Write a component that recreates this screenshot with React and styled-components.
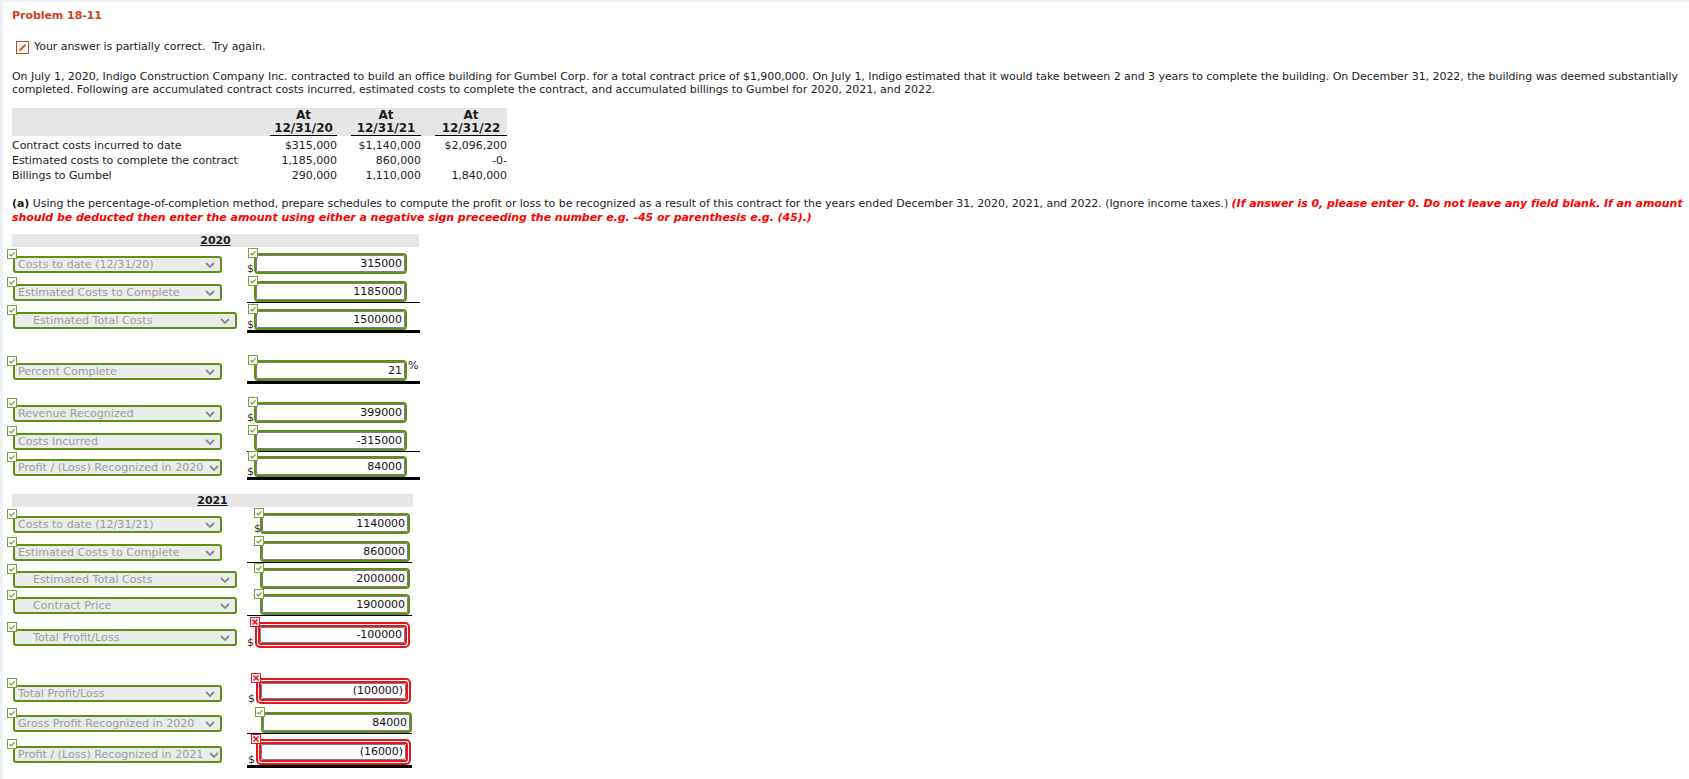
import React from "react";
import styled, { createGlobalStyle, css } from "styled-components";

const GREEN = "#5f8f14";
const RED = "#e8141b";

const Global = createGlobalStyle`
  html, body { margin: 0; padding: 0; background: #fff; }
  body {
    font-family: "DejaVu Sans", Verdana, sans-serif;
    font-size: 11px;
    color: #1c1c1c;
  }
`;

const Page = styled.div`
  border-top: 2px solid #eef2f7;
  border-left: 3px solid #eef2f7;
  padding: 7px 0 10px 9px;
  min-height: 760px;
  letter-spacing: -0.05px;
`;

const Title = styled.div`
  font-weight: bold;
  color: #c8461e;
  line-height: 14px;
`;

const Feedback = styled.div`
  display: flex;
  align-items: center;
  gap: 5px;
  margin: 17px 0 0 4px;
  height: 14px;
  line-height: 14px;
`;

const EditBox = styled.span`
  width: 13px;
  height: 13px;
  box-sizing: border-box;
  border: 1px solid #c8461e;
  display: inline-flex;
  align-items: center;
  justify-content: center;
  background: #fff;
`;

const Para = styled.p`
  margin: 16px 0 0;
  line-height: 13.2px;
  white-space: nowrap;
`;

const Table = styled.div`
  margin-top: 12px;
  width: 495px;
`;

const grid = css`
  display: grid;
  grid-template-columns: 244px 67px 70px 72px;
  column-gap: 14px;
`;

const THead = styled.div`
  ${grid}
  background: #e6e6e6;
  padding-top: 1px;
  height: 28px;
  box-sizing: border-box;
`;

const TH = styled.div`
  font-weight: bold;
  font-size: 12px;
  text-align: center;
  line-height: 13px;
  border-bottom: ${(p) => (p.$blank ? "none" : "1px solid #000")};
  align-self: end;
`;

const TRow = styled.div`
  ${grid}
  line-height: 15px;
  margin-top: ${(p) => p.$mt || 0}px;
`;

const TD = styled.div`
  text-align: ${(p) => (p.$label ? "left" : "right")};
  white-space: nowrap;
`;

const Instr = styled.p`
  margin: 14px 0 0;
  line-height: 14px;
  white-space: nowrap;
`;

const Strong = styled.b`
  font-weight: bold;
`;

const Warn = styled.span`
  color: #f00;
  font-weight: bold;
  font-style: italic;
`;

const Form = styled.div`
  margin: 9px 0 0 -5px;
`;

const Band = styled.div`
  margin: ${(p) => p.$mt}px 0 0 5px;
  width: ${(p) => p.$w}px;
  height: 13px;
  background: #e6e6e6;
  text-align: center;
  line-height: 13px;
  font-weight: bold;
`;

const BandText = styled.span`
  text-decoration: underline;
`;

const Row = styled.div`
  display: flex;
  align-items: flex-end;
  margin-top: ${(p) => p.$mt}px;
`;

const SelectCell = styled.div`
  width: 240px;
  flex: none;
  padding-left: 6px;
  padding-bottom: ${(p) => p.$pb}px;
  box-sizing: border-box;
`;

const Select = styled.div`
  position: relative;
  width: ${(p) => (p.$wide ? 224 : 209)}px;
  height: 17px;
  box-sizing: border-box;
  border: 2px solid ${GREEN};
  border-radius: 3px;
  background: #ebebeb;
  color: #9d9d9d;
  font-size: 11.1px;
  letter-spacing: 0;
  line-height: 13px;
  padding: 0 ${(p) => (p.$tight ? 1 : 5)}px 0 ${(p) => (p.$wide ? 18 : 3)}px;
  display: flex;
  align-items: center;
  justify-content: space-between;
  gap: 1px;
  white-space: nowrap;
`;

const SelectText = styled.span`
  overflow: hidden;
  min-width: 0;
`;

const ChevronSvg = styled.svg`
  flex: none;
`;

const Badge = styled.span`
  position: absolute;
  left: ${(p) => p.$x}px;
  top: ${(p) => p.$y}px;
  width: 10px;
  height: 10px;
  box-sizing: border-box;
  border: 1px solid ${(p) => (p.$bad ? RED : "#79a23a")};
  background: #fff;
  display: flex;
  align-items: center;
  justify-content: center;
  z-index: 1;
`;

const Amount = styled.div`
  width: ${(p) => p.$w}px;
  flex: none;
  display: flex;
  align-items: flex-end;
  padding-left: ${(p) => p.$pad}px;
  box-sizing: border-box;
  border-bottom: ${(p) =>
    p.$line === "thick" ? "3px solid #000" : p.$line === "thin" ? "1px solid #000" : "none"};
`;

const Dollar = styled.span`
  width: ${(p) => p.$slot}px;
  flex: none;
  line-height: 11px;
  color: #3a2a10;
`;

const Frame = styled.div`
  position: relative;
  width: ${(p) => p.$w}px;
  flex: none;
  box-sizing: border-box;
  border: 2px solid ${(p) => (p.$bad ? RED : GREEN)};
  border-radius: ${(p) => (p.$bad ? 5 : 4)}px;
  padding: ${(p) => (p.$bad ? 1 : 0)}px;
  background: #fff;
`;

const RedRing = styled.div`
  border: 2px solid ${RED};
  border-radius: 3px;
`;

const Input = styled.div`
  height: ${(p) => (p.$bad ? 16 : 17)}px;
  box-sizing: border-box;
  border: 1px solid #7d7d7d;
  border-radius: 2px;
  background: #fff;
  text-align: right;
  padding-right: 2px;
  line-height: ${(p) => (p.$bad ? 14 : 15)}px;
  color: #111;
`;

const Percent = styled.span`
  align-self: flex-start;
  margin: 1px 0 0 1px;
  line-height: 10px;
`;

const Check = () => (
  <svg width="8" height="8" viewBox="0 0 8 8">
    <polyline points="1.5,4.2 3.2,5.8 6.6,2.4" fill="none" stroke="#6e9b2c" strokeWidth="1.2" />
  </svg>
);

const Cross = () => (
  <svg width="8" height="8" viewBox="0 0 8 8">
    <path d="M2 2 L6 6 M6 2 L2 6" stroke={RED} strokeWidth="1.7" strokeLinecap="round" />
  </svg>
);

const Chevron = () => (
  <ChevronSvg width="10" height="6" viewBox="0 0 10 6">
    <polyline points="1,1 5,5 9,1" fill="none" stroke="#8a8a8a" strokeWidth="1.8" />
  </ChevronSvg>
);

const FormRow = ({ r }) => {
  const line = r.line || "none";
  const lineW = line === "thick" ? 3 : line === "thin" ? 1 : 0;
  const pb = lineW + (r.bad ? 2 : 1);
  return (
    <Row $mt={r.mt}>
      <SelectCell $pb={pb}>
        <Select $wide={r.wide} $tight={r.tight}>
          <Badge $x={-8} $y={-9}>
            <Check />
          </Badge>
          <SelectText>{r.label}</SelectText>
          <Chevron />
        </Select>
      </SelectCell>
      <Amount $w={r.cellW} $pad={r.pad} $line={line}>
        <Dollar $slot={r.slot}>{r.dollar ? "$" : ""}</Dollar>
        <Frame $w={r.fieldW} $bad={r.bad}>
          <Badge $x={r.bad ? -7 : -8} $y={-7} $bad={r.bad}>
            {r.bad ? <Cross /> : <Check />}
          </Badge>
          {r.bad ? (
            <RedRing>
              <Input $bad>{r.value}</Input>
            </RedRing>
          ) : (
            <Input>{r.value}</Input>
          )}
        </Frame>
        {r.percent && <Percent>%</Percent>}
      </Amount>
    </Row>
  );
};

const g20 = { cellW: 173, pad: 0, slot: 7, fieldW: 153 };
const g21 = { cellW: 165, pad: 7, slot: 6, fieldW: 150 };

const rows2020 = [
  { ...g20, label: "Costs to date (12/31/20)", mt: 6, dollar: true, value: "315000" },
  { ...g20, label: "Estimated Costs to Complete", mt: 7, value: "1185000", line: "thin" },
  { ...g20, label: "Estimated Total Costs", wide: true, mt: 6, dollar: true, value: "1500000", line: "thick" },
  { ...g20, label: "Percent Complete", mt: 27, value: "21", percent: true, line: "thick" },
  { ...g20, label: "Revenue Recognized", mt: 18, dollar: true, value: "399000" },
  { ...g20, label: "Costs Incurred", mt: 7, value: "-315000", line: "thin" },
  { ...g20, label: "Profit / (Loss) Recognized in 2020", tight: true, mt: 4, dollar: true, value: "84000", line: "thick" },
];

const rows2021 = [
  { ...g21, label: "Costs to date (12/31/21)", mt: 6, dollar: true, value: "1140000" },
  { ...g21, label: "Estimated Costs to Complete", mt: 7, value: "860000", line: "thin" },
  { ...g21, label: "Estimated Total Costs", wide: true, mt: 5, value: "2000000" },
  { ...g21, label: "Contract Price", wide: true, mt: 5, value: "1900000", line: "thin" },
  { cellW: 165, pad: 0, slot: 8, fieldW: 155, bad: true, label: "Total Profit/Loss", wide: true, mt: 6, dollar: true, value: "-100000" },
  { cellW: 165, pad: 1, slot: 8, fieldW: 155, bad: true, label: "Total Profit/Loss", mt: 30, dollar: true, value: "(100000)" },
  { cellW: 165, pad: 7, slot: 7, fieldW: 151, label: "Gross Profit Recognized in 2020", mt: 8, value: "84000", line: "thin" },
  { cellW: 165, pad: 1, slot: 8, fieldW: 155, bad: true, label: "Profit / (Loss) Recognized in 2021", tight: true, mt: 5, dollar: true, value: "(16000)", line: "thick" },
];

const tableRows = [
  ["Contract costs incurred to date", "$315,000", "$1,140,000", "$2,096,200"],
  ["Estimated costs to complete the contract", "1,185,000", "860,000", "-0-"],
  ["Billings to Gumbel", "290,000", "1,110,000", "1,840,000"],
];

export default function App() {
  return (
    <>
      <Global />
      <Page>
        <Title>Problem 18-11</Title>
        <Feedback>
          <EditBox>
            <svg width="9" height="9" viewBox="0 0 9 9">
              <path d="M2 7.2 L7 2.2" stroke="#c8461e" strokeWidth="1.8" strokeLinecap="round" />
            </svg>
          </EditBox>
          <span>Your answer is partially correct.&nbsp; Try again.</span>
        </Feedback>
        <Para>
          On July 1, 2020, Indigo Construction Company Inc. contracted to build an office building for Gumbel Corp. for a total contract price of $1,900,000. On July 1, Indigo estimated that it would take between 2 and 3 years to complete the building. On December 31, 2022, the building was deemed substantially
          <br />
          completed. Following are accumulated contract costs incurred, estimated costs to complete the contract, and accumulated billings to Gumbel for 2020, 2021, and 2022.
        </Para>
        <Table>
          <THead>
            <TH $blank />
            <TH>At<br />12/31/20</TH>
            <TH>At<br />12/31/21</TH>
            <TH>At<br />12/31/22</TH>
          </THead>
          {tableRows.map((r, i) => (
            <TRow key={i} $mt={i === 0 ? 2 : 0}>
              <TD $label>{r[0]}</TD>
              <TD>{r[1]}</TD>
              <TD>{r[2]}</TD>
              <TD>{r[3]}</TD>
            </TRow>
          ))}
        </Table>
        <Instr>
          <Strong>(a)</Strong> Using the percentage-of-completion method, prepare schedules to compute the profit or loss to be recognized as a result of this contract for the years ended December 31, 2020, 2021, and 2022. (Ignore income taxes.){" "}
          <Warn>(If answer is 0, please enter 0. Do not leave any field blank. If an amount</Warn>
          <br />
          <Warn>should be deducted then enter the amount using either a negative sign preceeding the number e.g. -45 or parenthesis e.g. (45).)</Warn>
        </Instr>
        <Form>
          <Band $mt={0} $w={407}>
            <BandText>2020</BandText>
          </Band>
          {rows2020.map((r, i) => (
            <FormRow key={i} r={r} />
          ))}
          <Band $mt={14} $w={401}>
            <BandText>2021</BandText>
          </Band>
          {rows2021.map((r, i) => (
            <FormRow key={i} r={r} />
          ))}
        </Form>
      </Page>
    </>
  );
}
